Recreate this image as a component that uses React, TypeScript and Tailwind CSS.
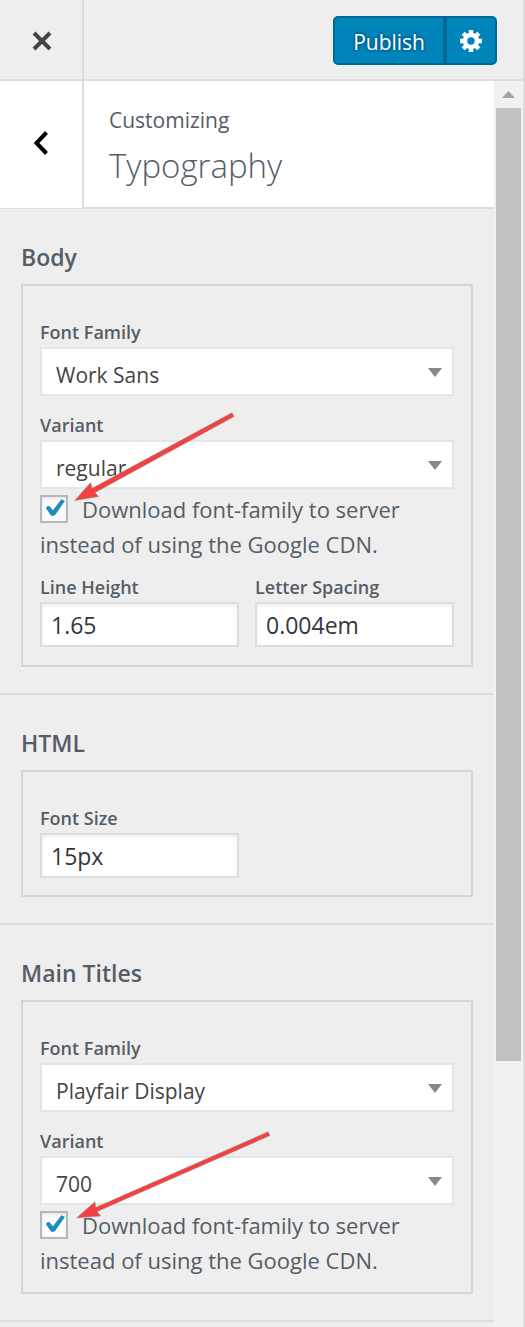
import { useId, useState } from "react";
import type { ReactNode } from "react";

function Section({ title, children }: { title: string; children: ReactNode }) {
  return (
    <section className="border-b-2 border-[#dddddd] pt-[30px] pr-[21px] pb-[26px] pl-[21px]">
      <h3 className="mb-[9px] text-[23px] leading-9 font-semibold">{title}</h3>
      <div className="border-2 border-[#d5d5d5] px-[17px] pt-[31px] pb-[14px]">{children}</div>
    </section>
  );
}

const labelClass = "block text-[18px] leading-[30px] font-semibold";

function SelectField({ label, options }: { label: string; options: string[] }) {
  const id = useId();
  return (
    <div>
      <label htmlFor={id} className={labelClass}>
        {label}
      </label>
      <div className="relative">
        <select
          id={id}
          className="block h-[49px] w-full appearance-none border-2 border-[#e5e5e5] bg-white pt-1.5 pr-10 pl-[14px] text-[21px] leading-8 text-[#444444]"
        >
          {options.map((o) => (
            <option key={o}>{o}</option>
          ))}
        </select>
        <svg
          className="pointer-events-none absolute top-[21px] right-3 h-[9px] w-[14px]"
          viewBox="0 0 14 9"
          fill="#888888"
          aria-hidden="true"
        >
          <path d="M0 0H14L7 9Z" />
        </svg>
      </div>
    </div>
  );
}

function TextField({ label, value }: { label: string; value: string }) {
  const id = useId();
  return (
    <div>
      <label htmlFor={id} className={labelClass}>
        {label}
      </label>
      <input
        id={id}
        type="text"
        defaultValue={value}
        className="block h-[45px] w-full border-2 border-[#dddddd] bg-white px-[9px] text-[23px] leading-8 text-[#32373c] shadow-[inset_0_2px_4px_rgba(0,0,0,0.07)]"
      />
    </div>
  );
}

function DownloadOption({ children }: { children?: ReactNode }) {
  const [checked, setChecked] = useState(true);
  return (
    <div className="relative mt-[3px]">
      <label className="block text-[22px] leading-[35px]">
        <span className="relative mt-[3px] mr-[14px] inline-block size-7 align-top">
          <input
            type="checkbox"
            checked={checked}
            onChange={(e) => setChecked(e.target.checked)}
            className="block size-7 appearance-none border-2 border-[#b4b9be] bg-white shadow-[inset_0_2px_4px_rgba(0,0,0,0.1)]"
          />
          {checked && (
            <svg
              className="pointer-events-none absolute inset-0 size-7"
              viewBox="0 0 28 28"
              fill="#1e8cbe"
              aria-hidden="true"
            >
              <path d="M21.4 4.3 24.8 6 15.5 19.6Q13 22.2 10.6 20L6 13.2Q6.6 10.6 9.6 11.2L12.9 15.2Z" />
            </svg>
          )}
        </span>
        Download font-family to server instead of using the Google CDN.
      </label>
      {children}
    </div>
  );
}

export default function App() {
  return (
    <div className="flex min-h-screen flex-col border-r-2 border-[#dddddd] bg-[#eeeeee] font-['Open_Sans','Noto_Sans',sans-serif] text-[#555d66]">
      <header className="flex h-[81px] items-stretch border-b-2 border-[#dddddd]">
        <button
          type="button"
          aria-label="Close"
          className="flex w-[84px] items-center justify-center border-r-2 border-[#dddddd] pt-0.5 pl-0.5"
        >
          <svg className="size-5" viewBox="0 0 20 20" stroke="#444444" strokeWidth="4" aria-hidden="true">
            <path d="M2 2 18 18M18 2 2 18" />
          </svg>
        </button>
        <div className="flex flex-1 items-start justify-end pt-4 pr-[26px]">
          <button
            type="button"
            className="h-[49px] rounded-l-[5px] border-2 border-[#006799] bg-[#0085ba] px-[18px] pt-0.5 text-[21px] leading-8 text-white [text-shadow:0_-2px_2px_#006799,2px_0_2px_#006799,0_2px_2px_#006799,-2px_0_2px_#006799]"
          >
            Publish
          </button>
          <button
            type="button"
            aria-label="Publish settings"
            className="flex h-[49px] w-[52px] items-center justify-center rounded-r-[5px] border-2 border-[#006799] bg-[#0085ba]"
          >
            <svg className="size-[22px]" viewBox="0 0 22 22" fill="none" stroke="white" aria-hidden="true">
              <circle cx="11" cy="11" r="6" strokeWidth="4.6" />
              <g strokeWidth="4.4">
                <path d="M11 0V4M11 18V22M0 11H4M18 11H22" />
                <path d="M3.2 3.2 6 6M16 16 18.8 18.8M18.8 3.2 16 6M6 16 3.2 18.8" />
              </g>
            </svg>
          </button>
        </div>
      </header>

      <div className="flex flex-1">
        <main className="min-w-0 flex-1">
          <div className="flex h-32 bg-white">
            <button
              type="button"
              aria-label="Back"
              className="flex w-[84px] items-center justify-center border-r-2 border-b border-r-[#dddddd] border-b-[#dddddd] pb-1"
            >
              <svg
                className="h-6 w-4"
                viewBox="0 0 16 24"
                fill="none"
                stroke="black"
                strokeWidth="4"
                aria-hidden="true"
              >
                <path d="M13.5 1.5 3.5 12 13.5 22.5" />
              </svg>
            </button>
            <h2 className="flex-1 border-b-2 border-[#dddddd] pt-[19px] pl-[25px]">
              <span className="block text-[21px] leading-10">Customizing</span>
              <span className="block text-[33px] leading-[52px] font-light">Typography</span>
            </h2>
          </div>

          <Section title="Body">
            <div className="grid gap-[14px]">
              <SelectField label="Font Family" options={["Work Sans", "Playfair Display"]} />
              <SelectField label="Variant" options={["regular", "700"]} />
            </div>
            <DownloadOption>
              <svg
                className="pointer-events-none absolute -top-20 left-[34px] h-[90px] w-[162px]"
                viewBox="0 0 162 90"
                fill="#f44040"
                stroke="#a08080"
                strokeWidth="0.6"
                aria-hidden="true"
              >
                <path d="M158 0.8 160 4.6 21 80.6 24.5 84.5 0.8 88.5 16.5 70.8 18.2 76.3Z" />
              </svg>
            </DownloadOption>
            <div className="mt-[10px] mb-1 grid grid-cols-2 gap-4">
              <TextField label="Line Height" value="1.65" />
              <TextField label="Letter Spacing" value="0.004em" />
            </div>
          </Section>

          <Section title="HTML">
            <div className="mb-[3px] grid grid-cols-2 gap-4">
              <TextField label="Font Size" value="15px" />
            </div>
          </Section>

          <Section title="Main Titles">
            <div className="grid gap-[14px]">
              <SelectField label="Font Family" options={["Playfair Display", "Work Sans"]} />
              <SelectField label="Variant" options={["700", "regular"]} />
            </div>
            <DownloadOption>
              <svg
                className="pointer-events-none absolute -top-[77px] left-9 h-[90px] w-[196px]"
                viewBox="0 0 196 90"
                fill="#f44040"
                stroke="#a08080"
                strokeWidth="0.6"
                aria-hidden="true"
              >
                <path d="M192.2 0.8 193.8 4.6 21 80.6 24.5 85 0.8 86.8 19 70.8 19.6 76.6Z" />
              </svg>
            </DownloadOption>
          </Section>
        </main>

        <div className="w-[29px] shrink-0 bg-[#f1f1f1] px-0.5" aria-hidden="true">
          <div className="flex h-[27px] items-center justify-center">
            <svg className="h-[7px] w-[13px]" viewBox="0 0 13 7" fill="#a3a3a3">
              <path d="M6.5 0 13 7H0Z" />
            </svg>
          </div>
          <div className="h-[953px] bg-[#c1c1c1]" />
        </div>
      </div>
    </div>
  );
}
